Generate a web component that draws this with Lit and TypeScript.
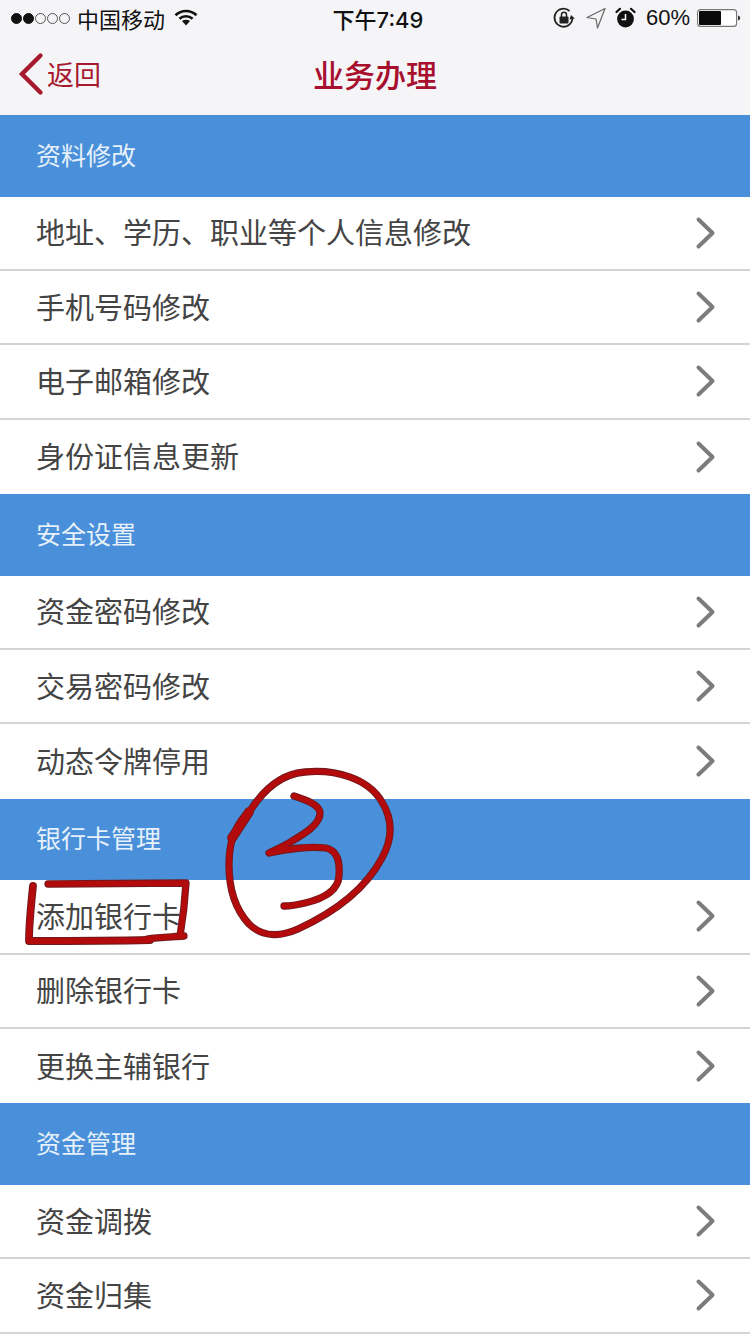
import { LitElement, html, css, svg } from "lit";
import { customElement } from "lit/decorators.js";

const SECTIONS: { title: string; rows: string[] }[] = [
  { title: "资料修改", rows: ["地址、学历、职业等个人信息修改", "手机号码修改", "电子邮箱修改", "身份证信息更新"] },
  { title: "安全设置", rows: ["资金密码修改", "交易密码修改", "动态令牌停用"] },
  { title: "银行卡管理", rows: ["添加银行卡", "删除银行卡", "更换主辅银行"] },
  { title: "资金管理", rows: ["资金调拨", "资金归集"] },
];

const chevron = html`<svg class="chev" width="24" height="36" viewBox="0 0 24 36"><path d="M4.5 4.5 L18.5 18 L4.5 31.5" fill="none" stroke="#7c7c7c" stroke-width="4" stroke-linecap="round" stroke-linejoin="round"/></svg>`;

const strokes = (extra: number) => svg`
    <path stroke-width="${6.5 + extra}" d="M250 811 C262 792 280 774 305 772 C335 769 368 778 382 802 C393 820 393 838 382 858 C366 888 335 912 298 929 C280 937 262 937 249 924 C235 909 229 888 229 865 C229 850 231 840 235 832 C239 822 244 816 250 811"/>
    <path stroke-width="${9 + extra}" d="M232 838 L249 812"/>
    <path stroke-width="${6.5 + extra}" d="M294 796 C306 800 318 804 320 812 C321 824 304 834 292 841 C284 846 275 850 269 853 C285 849 310 846 326 848 C338 851 340 862 339 876 C338 892 322 899 305 903 C297 905 290 906 284 906"/>
    <path stroke-width="${7 + extra}" d="M33 886 C31 905 29 925 29 941 C70 941 110 941 150 940"/>
    <path stroke-width="${6.5 + extra}" d="M48 884 L186 883 C185 900 183 918 180 936"/>
    <path stroke-width="${6.5 + extra}" d="M147 939 C160 937 172 937 184 936"/>`;

const scribble = svg`
  <g fill="none" stroke-linecap="round" stroke-linejoin="round">
    <g stroke="#6e1a1e">${strokes(0.8)}</g>
    <g stroke="#b30a0c">${strokes(-1)}</g>
  </g>`;

@customElement("app-root")
export class AppRoot extends LitElement {
  static styles = css`
    :host {
      display: block;
      width: 750px;
      height: 1334px;
      overflow: hidden;
      position: relative;
      background: #fff;
      font-family: "Noto Sans CJK SC", "Noto Sans", sans-serif;
    }
    .top { height: 115px; background: #f5f5f8; display: flex; flex-direction: column; }
    .status {
      height: 36px;
      display: grid;
      grid-template-columns: 1fr auto 1fr;
      align-items: center;
      color: #111;
      font-size: 22px;
    }
    .left { display: flex; align-items: center; padding-left: 11px; }
    .dots { display: flex; gap: 1px; margin-right: 7px; }
    .dot { width: 11px; height: 11px; border-radius: 50%; background: #111; border: 1px solid #111; box-sizing: border-box; }
    .dot.off { background: transparent; border-color: #555; }
    .wifi { margin-left: 9px; }
    .time { font-size: 22px; font-family: "Inter", "Noto Sans CJK SC", sans-serif; font-weight: 500; padding-left: 6px; }
    .right { display: flex; align-items: center; justify-content: flex-end; padding-right: 9px; }
    .lock { margin-right: 9px; }
    .arrow { margin-right: 8px; }
    .pct { font-family: "Liberation Sans", sans-serif; font-size: 22px; margin: 0 7px 0 10px; }
    .nav { flex: 1; display: grid; grid-template-columns: 1fr auto 1fr; align-items: center; padding-bottom: 4px; }
    .back { display: flex; align-items: center; padding-left: 18px; color: #a6192e; font-size: 27px; line-height: 1; }
    .back svg { margin-right: 3px; }
    .title { font-size: 31px; font-weight: 500; color: #a80f2d; line-height: 1; }
    .section {
      height: 81.67px;
      box-sizing: border-box;
      background: #4a8fd9;
      color: #e6f1fb;
      font-size: 25px;
      display: flex;
      align-items: center;
      padding: 0 0 4px 36px;
    }
    .row {
      height: 74.33px;
      box-sizing: border-box;
      display: flex;
      align-items: center;
      justify-content: space-between;
      padding: 0 32px 0 36px;
      color: #444;
      font-size: 29px;
      border-bottom: 2px solid #d4d4d8;
      background: #fff;
    }
    .row.last { border-bottom: none; }
    .row span { line-height: 1; margin-top: -2px; }
    .ink { position: absolute; left: 0; top: 0; pointer-events: none; }
  `;

  render() {
    return html`
      <div class="top">
        <div class="status">
          <div class="left">
            <div class="dots">
              ${[1, 1, 0, 0, 0].map((on) => html`<div class="dot ${on ? "" : "off"}"></div>`)}
            </div>
            <span>中国移动</span>
            <svg class="wifi" width="24" height="18" viewBox="0 0 24 18">
              <path d="M1.5 6.2 C7.5 .6 16.5 .6 22.5 6.2" fill="none" stroke="#111" stroke-width="2.6"/>
              <path d="M5.4 9.8 C9.3 6.4 14.7 6.4 18.6 9.8" fill="none" stroke="#111" stroke-width="2.6"/>
              <path d="M8 12 C10.4 10.2 13.6 10.2 16 12 L12 16.5 Z" fill="#111"/>
            </svg>
          </div>
          <div class="time">下午7:49</div>
          <div class="right">
            <svg class="lock" width="24" height="24" viewBox="0 0 24 24">
              <path d="M20.5 12 A9 9 0 1 1 17.5 5" fill="none" stroke="#222" stroke-width="1.8"/>
              <path d="M19 9 L22.8 12.5 L17.5 13.5 Z" fill="#222"/>
              <rect x="7.5" y="10.5" width="9" height="7" rx="1" fill="#222"/>
              <path d="M9.5 11 V8.8 A2.5 2.5 0 0 1 14.5 8.8 V11" fill="none" stroke="#222" stroke-width="1.5"/>
            </svg>
            <svg class="arrow" width="22" height="24" viewBox="0 0 22 24">
              <path d="M20 2.5 L2 11.5 L11 13 L12.5 22 Z" fill="none" stroke="#666" stroke-width="1.2" stroke-linejoin="round"/>
            </svg>
            <svg width="21" height="22" viewBox="0 0 21 22">
              <circle cx="10.5" cy="12" r="8.4" fill="#111"/>
              <path d="M1.5 5 L5 1.8 M19.5 5 L16 1.8" stroke="#111" stroke-width="2.2" stroke-linecap="round"/>
              <path d="M10.5 7 V12.5 H6.5" fill="none" stroke="#fff" stroke-width="1.5"/>
            </svg>
            <span class="pct">60%</span>
            <svg width="44" height="20" viewBox="0 0 44 20">
              <rect x=".6" y="1.6" width="39" height="16.8" rx="3" fill="#fff" stroke="#777" stroke-width="1.1"/>
              <rect x="2" y="3" width="22" height="14" rx="1" fill="#0a0a0a"/>
              <path d="M41 7.5 C42.6 8 43.2 9 43.2 10 C43.2 11 42.6 12 41 12.5 Z" fill="#333"/>
            </svg>
          </div>
        </div>
        <div class="nav">
          <div class="back">
            <svg width="26" height="44" viewBox="0 0 26 44"><path d="M22.5 3.5 L4 22 L22.5 40.5" fill="none" stroke="#a6192e" stroke-width="4.4" stroke-linecap="round" stroke-linejoin="miter"/></svg>
            <span>返回</span>
          </div>
          <div class="title">业务办理</div>
          <div></div>
        </div>
      </div>
      ${SECTIONS.map(
        (s, si) => html`
          <div class="section">${s.title}</div>
          ${s.rows.map(
            (r, i) => html`<div class="row ${i === s.rows.length - 1 && si < SECTIONS.length - 1 ? "last" : ""}">
              <span>${r}</span>${chevron}
            </div>`
          )}
        `
      )}
      <svg class="ink" width="750" height="1334" viewBox="0 0 750 1334">${scribble}</svg>
    `;
  }
}
